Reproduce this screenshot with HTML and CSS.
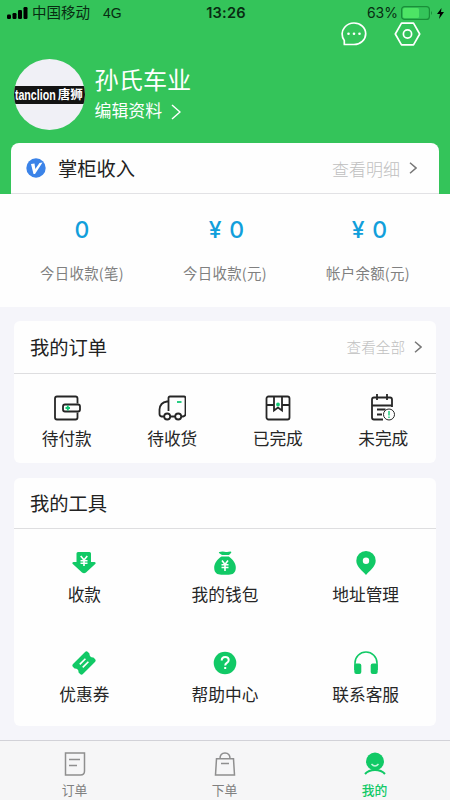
FILE: index.html
```html
<!DOCTYPE html>
<html lang="zh-CN">
<head>
<meta charset="utf-8">
<meta name="viewport" content="width=device-width, initial-scale=1">
<title>我的</title>
<link rel="stylesheet" href="styles.css">
</head>
<body>
<div class="app">
  <header class="hero">
    <div class="status">
      <div class="carrier">
        <svg width="21" height="12" viewBox="0 0 21 12"><rect x="0" y="7.500" width="4" height="4.500" rx="1.200"/><rect x="5.500" y="6" width="4" height="6" rx="1.200"/><rect x="11" y="3" width="4" height="9" rx="1.200"/><rect x="16.500" y="0" width="4" height="12" rx="1.200"/></svg>
        <span class="operator">中国移动</span><span class="network">4G</span>
      </div>
      <time>13:26</time>
      <div class="power">
        <span>63%</span>
        <svg width="32" height="14" viewBox="0 0 32 14"><rect x=".6" y=".6" width="27.800" height="12.800" rx="3" fill="none" stroke="#198f39" stroke-width="1.200"/><rect x="2" y="2" width="16" height="10" rx="1.500" fill="#4de465"/><path d="M30 5q2 2 0 4z" fill="#198f39"/></svg>
        <svg class="bolt" width="7" height="11" viewBox="0 0 7 11"><path d="M4.500 0 0 6h3l-1 5 5-7H4z"/></svg>
      </div>
    </div>
    <div class="actions">
      <svg width="26" height="24" viewBox="0 0 26 24" fill="none" stroke="#fff" stroke-width="1.700" stroke-linejoin="round"><path d="M3.300 22.500v-4C.2 14.500.5 9 3.500 5.500 5.700 2.800 9 1 13 1c6.500 0 11.700 4.700 11.700 10.700S19.500 22.500 13 22.500z"/><g fill="#fff" stroke="none"><circle cx="7.500" cy="11.800" r="1.300"/><circle cx="13" cy="11.800" r="1.300"/><circle cx="18.500" cy="11.800" r="1.300"/></g></svg>
      <svg width="27" height="24" viewBox="0 0 27 24" fill="none" stroke="#fff" stroke-width="1.700" stroke-linejoin="round"><path d="M7.500 1.200h12L25.700 12l-6.200 10.800h-12L1.300 12z"/><circle cx="13.500" cy="12" r="4.100"/></svg>
    </div>
    <div class="profile">
      <div class="avatar"><div class="brand"><span class="brand-en">tanclion</span><span class="brand-cn">唐狮</span></div></div>
      <div>
        <h1>孙氏车业</h1>
        <div class="edit">编辑资料 <svg width="10" height="16" viewBox="0 0 10 16"><path d="m1 1 8 7-8 7"/></svg></div>
      </div>
    </div>
    <div class="income-head">
      <svg width="20" height="20" viewBox="0 0 20 20"><circle cx="10" cy="10" r="9.700" fill="#3b83e8"/><path d="m5 6 3.500-.5.800 5.500L13.500 5l3-.5L9 16H7.500z" fill="#fff"/></svg>
      <h2>掌柜收入</h2>
      <span class="more">查看明细</span>
      <svg class="chevron" width="8" height="12" viewBox="0 0 8 12"><path d="m1 .8 6 5.200-6 5.200"/></svg>
    </div>
  </header>
  <section class="income">
    <div><b>0</b><span>今日收款(笔)</span></div>
    <div><b>¥ 0</b><span>今日收款(元)</span></div>
    <div><b>¥ 0</b><span>帐户余额(元)</span></div>
  </section>
  <section class="card orders">
    <div class="card-head">
      <h2>我的订单</h2><span class="more">查看全部</span>
      <svg class="chevron" width="8" height="12" viewBox="0 0 8 12"><path d="m1 .8 6 5.200-6 5.200"/></svg>
    </div>
    <div class="order-grid">
      <div class="item"><svg class="line" viewBox="0 0 28 28"><path d="M24.500 9.500V4.500q0-2-2-2H4q-2 0-2 2v19q0 2 2 2h18.500q2 0 2-2v-5"/><rect x="10" y="10.500" width="17" height="7" rx="2"/><path class="accent" d="M14.800 11.500v5M12.500 14H17"/></svg><span>待付款</span></div>
      <div class="item"><svg class="line" viewBox="0 0 28 28"><path d="M10.500 17V4q0-1.500 1.500-1.500h14q1.500 0 1.500 1.500v16q0 2-2.500 2.500h-2M10.500 7.500H9Q2 8.500 1.500 15.500V20q0 2.200 2 2.500H6M12.500 22.500h4.500"/><circle cx="9.200" cy="22.500" r="3"/><circle cx="20.200" cy="22.500" r="3"/><path class="accent" d="M19 8h4.500"/></svg><span>待收货</span></div>
      <div class="item"><svg class="line" viewBox="0 0 28 28"><rect x="2.500" y="2.500" width="23" height="23" rx="2"/><path d="M2.500 11H10M18 11h7.500M10 2.500v14l4-3 4 3v-14"/><circle class="accent" cx="14" cy="10.500" r="1"/></svg><span>已完成</span></div>
      <div class="item"><svg class="line" viewBox="0 0 28 28"><path d="M23 13V5.500q0-2-2-2H5q-2 0-2 2v18q0 2 2 2h9M3 11.500h20M8 0v6M18 0v6M8 15.500h8.500M8 20.500h5"/><circle cx="20" cy="20.500" r="5.500" stroke-width="1" fill="#fefefe"/><path class="accent slim" d="M20 17v4.500m0 1v1.500"/></svg><span>未完成</span></div>
    </div>
  </section>
  <section class="card tools">
    <div class="card-head"><h2>我的工具</h2></div>
    <div class="tool-grid">
      <div class="item"><svg viewBox="0 0 24 24"><path d="M6 1h11.500Q19 1 19 2.500V11h3.500q2 .5.700 2L14 21.500q-2 1.500-4 0L.8 13Q-.5 11.500 1.500 11h3V2.500Q4.500 1 6 1z"/><path class="cut" d="m8.700 5 3.300 4 3.300-4M12 9v6M8.500 9.700h7m-7 2.600h7"/></svg><span>收款</span></div>
      <div class="item"><svg viewBox="0 0 24 24"><path d="M6.500 1q2.500-.7 5-.2 3 .5 6-.2 1.500 0 .5 1.500L16 4H9L6 2Q5.500 1 6.500 1zM8.500 5.500h7.300C20 8.500 23 12.500 22.800 17c-.2 5-3.300 6.700-7 6.700H8.200C4.500 23.700 1.300 22 1.200 17 1 12.500 4.500 8 8.500 5.500z"/><path class="cut" d="m9 9.500 3 4 3-4m-3 4v6.500m-3.500-6.200h7m-7 2.700h7"/></svg><span>我的钱包</span></div>
      <div class="item"><svg viewBox="0 0 24 24"><path fill-rule="evenodd" d="M12 0a9.700 9.700 0 0 0-9.700 9.700C2.300 16 9 20 12 24c3-4 9.700-8 9.700-14.300A9.700 9.700 0 0 0 12 0zm0 6.500a3.200 3.200 0 1 1 0 6.400 3.200 3.200 0 0 1 0-6.400z"/></svg><span>地址管理</span></div>
      <div class="item"><svg viewBox="0 0 24 24"><g transform="rotate(-45 12 12)"><path d="M3.500 5h17q2 0 2 2v2.200q-3 2.800 0 5.600V17q0 2-2 2h-17q-2 0-2-2v-2.200q3-2.800 0-5.600V7q0-2 2-2z"/><path class="cut" d="M8 10h8m-8 4.200h8"/></g></svg><span>优惠券</span></div>
      <div class="item"><svg viewBox="0 0 24 24"><circle cx="12" cy="12" r="11.300"/><path class="cut bold" d="M8.700 9.500q0-3.500 3.500-3.500t3.500 3q0 2-2 3-1.500.8-1.500 2.500m0 1.500v2"/></svg><span>帮助中心</span></div>
      <div class="item"><svg viewBox="0 0 24 24"><path d="M1 19v-7a11 11 0 0 1 22 0v7" fill="none" stroke="#11c966" stroke-width="1.600"/><rect x=".3" y="12.500" width="7" height="10.500" rx="2"/><rect x="16.700" y="12.500" width="7" height="10.500" rx="2"/></svg><span>联系客服</span></div>
    </div>
  </section>
  <nav class="tabs">
    <div class="tab"><svg viewBox="0 0 24 24"><path d="M2.500 1h19v18q0 4-4 4h-15zM6 7.500h11M6 13.500h8"/></svg><span>订单</span></div>
    <div class="tab"><svg viewBox="0 0 24 24"><path d="M3.500 6.800h17l1 16.200h-19zM7 6.800Q7 1 12 1t5 5.800M8 11.500h8"/></svg><span>下单</span></div>
    <div class="tab active"><svg viewBox="0 0 24 24"><circle cx="12" cy="9.500" r="9"/><path class="shoulders" d="M2 22q3.500-4 10-4t10 4"/><path class="smile" d="M8.500 12q3.500 4 7 0"/></svg><span>我的</span></div>
  </nav>
</div>
</body>
</html>
```
FILE: styles.css
```css
* { box-sizing: border-box; }
body { margin: 0; font-family: "Liberation Sans", "Noto Sans CJK SC", sans-serif; color: #333; }
h1, h2 { margin: 0; font-weight: 400; }
svg { display: block; flex: none; }
.app { width: 450px; height: 800px; display: flex; flex-direction: column; background: #f5f5fa; overflow: hidden; }
.hero { height: 194px; flex: none; background: #34c45a; display: flex; flex-direction: column; }
.status { height: 22px; flex: none; padding: 3px 7px 0; display: grid; grid-template-columns: 1fr auto 1fr; align-items: center; color: #082c12; font-size: 14px; line-height: 20px; }
.carrier { display: flex; align-items: center; }
.operator { margin-left: 4px; font-size: 14.5px; }
.network { margin-left: 13px; }
.status time { font-family: Inter, sans-serif; font-size: 14.6px; font-weight: 600; margin-left: 2px; letter-spacing: .2px; }
.power { display: flex; align-items: center; justify-content: flex-end; gap: 3px; font-family: Inter, sans-serif; margin-right: -1px; }
.power > span { font-size: 14px; }
.bolt { margin-left: 1px; }
.actions { height: 24px; flex: none; display: flex; justify-content: flex-end; gap: 27px; padding-right: 29px; }
.profile { height: 97px; flex: none; display: flex; padding: 13px 14px 0; gap: 9.5px; color: #fff; }
.avatar { width: 71px; height: 71px; border-radius: 50%; overflow: hidden; background: #f0f0f6; display: flex; align-items: center; }
.brand { width: 71px; height: 18px; background: #131313; color: #fff; display: flex; align-items: center; justify-content: center; gap: 2px; line-height: 18px; }
.brand-en { font-size: 14px; font-weight: 700; transform: scaleX(.76); transform-origin: right; margin-left: -14px; }
.brand-cn { font-size: 12.5px; font-weight: 700; }
.profile h1 { font-size: 24.2px; line-height: 36px; margin-top: 4px; }
.edit { display: flex; align-items: center; font-size: 16.9px; line-height: 24px; gap: 9px; margin-top: 1px; }
.edit path, .chevron path { fill: none; stroke: currentColor; stroke-width: 1.5; }
.income-head { height: 51px; margin: 0 11px; padding: 0 22px 0 15px; background: #fefefe; border-radius: 8px 8px 0 0; border-bottom: 1px solid #e2e2e5; display: flex; align-items: center; }
.income-head h2 { margin-left: 12px; font-size: 19.3px; }
h2 { color: #222; }
.more { margin-left: auto; color: #c0c0c0; font-size: 17px; font-weight: 300; }
.chevron { margin-left: 9px; color: #777; }
.income { height: 113px; flex: none; padding: 0 10.5px; background: #fefefe; display: grid; grid-template-columns: repeat(3, 1fr); text-align: center; }
.income > div { display: flex; flex-direction: column; }
.income b { margin-top: 20px; color: #119fdb; font-family: Inter, sans-serif; font-size: 23px; font-weight: 500; line-height: 32px; word-spacing: 1.5px; }
.income div + div b { padding-left: 3px; }
.income span { margin-top: 16px; color: #808080; font-family: "Noto Sans CJK SC", sans-serif; font-size: 14.4px; letter-spacing: .3px; line-height: 22px; white-space: nowrap; }
.card { margin: 14px 14px 0; background: #fefefe; border-radius: 6px; flex: none; }
.orders { height: 142px; }
.tools { height: 248px; margin-top: 15px; }
.card-head { height: 53px; padding: 0 14px 1px 16px; display: flex; align-items: center; border-bottom: 1px solid #dedee0; }
.tools .card-head { height: 51px; }
.card-head h2 { font-size: 19.3px; }
.card-head .more { font-size: 14.6px; }
.item { display: flex; flex-direction: column; align-items: center; color: #262626; font-size: 16.7px; line-height: 24px; }
.item svg { width: 24px; height: 24px; fill: #11c966; }
.item .cut { fill: none; stroke: #fff; stroke-width: 1.6; }
.item .bold { stroke-width: 2; }
.order-grid { display: grid; grid-template-columns: repeat(4, 1fr); padding-top: 20px; }
.orders .item svg { width: 28px; height: 28px; fill: none; stroke: #262626; stroke-width: 1.8; }
.item .accent { stroke: #12c976; }
.item .slim { stroke-width: 1.4; }
.orders .item span { margin-top: 6px; }
.tool-grid { display: grid; grid-template-columns: repeat(3, 1fr); grid-auto-rows: 100px; padding-top: 22px; }
.tools .item span { margin-top: 9px; }
.tabs { height: 60px; margin-top: auto; flex: none; border-top: 1px solid #d2d2d8; background: #f6f6f7; display: grid; grid-template-columns: repeat(3, 1fr); }
.tab { display: flex; flex-direction: column; align-items: center; padding-top: 11px; color: #808080; font-size: 12.8px; line-height: 20px; margin-left: -1px; }
.tab svg { width: 24px; height: 24px; fill: none; stroke: #8f8f8f; stroke-width: 1.5; }
.tab span { margin-top: 5px; }
.tab.active { color: #11c966; font-weight: 500; }
.tab.active circle { fill: #11c966; stroke: none; }
.tab .shoulders { stroke: #11c966; stroke-width: 2; }
.tab .smile { stroke: #c5f5dc; }
```
